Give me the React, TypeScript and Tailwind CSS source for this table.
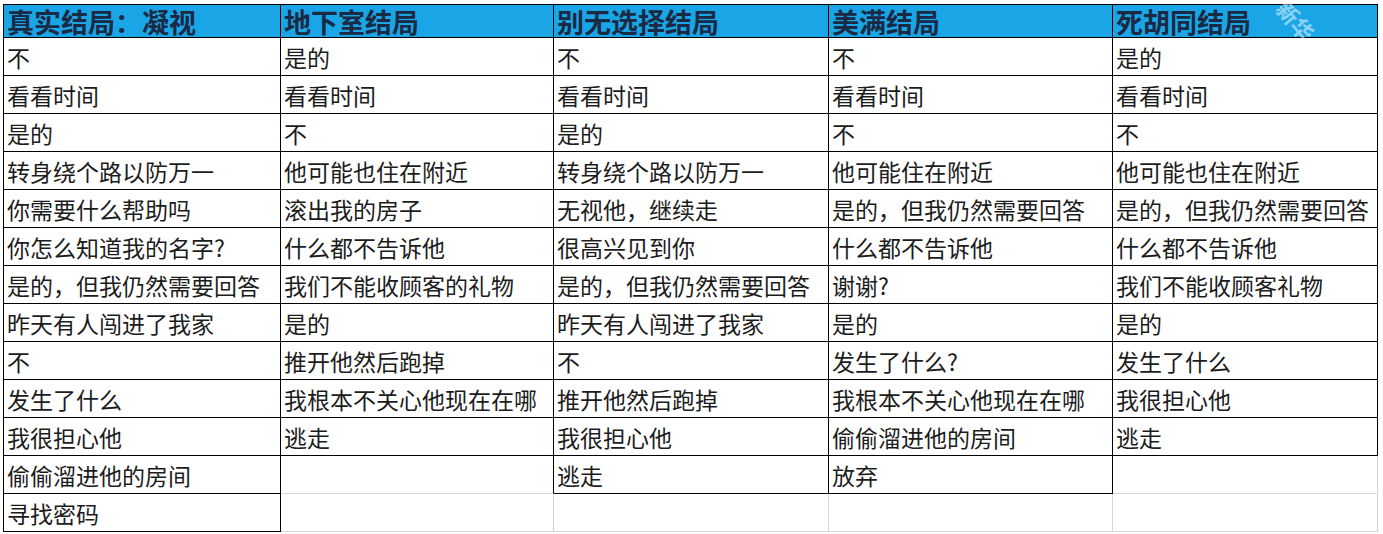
import React from "react";

const columns: { title: string; items: string[] }[] = [
  {
    title: "真实结局：凝视",
    items: [
      "不",
      "看看时间",
      "是的",
      "转身绕个路以防万一",
      "你需要什么帮助吗",
      "你怎么知道我的名字?",
      "是的，但我仍然需要回答",
      "昨天有人闯进了我家",
      "不",
      "发生了什么",
      "我很担心他",
      "偷偷溜进他的房间",
      "寻找密码",
    ],
  },
  {
    title: "地下室结局",
    items: [
      "是的",
      "看看时间",
      "不",
      "他可能也住在附近",
      "滚出我的房子",
      "什么都不告诉他",
      "我们不能收顾客的礼物",
      "是的",
      "推开他然后跑掉",
      "我根本不关心他现在在哪",
      "逃走",
    ],
  },
  {
    title: "别无选择结局",
    items: [
      "不",
      "看看时间",
      "是的",
      "转身绕个路以防万一",
      "无视他，继续走",
      "很高兴见到你",
      "是的，但我仍然需要回答",
      "昨天有人闯进了我家",
      "不",
      "推开他然后跑掉",
      "我很担心他",
      "逃走",
    ],
  },
  {
    title: "美满结局",
    items: [
      "不",
      "看看时间",
      "不",
      "他可能住在附近",
      "是的，但我仍然需要回答",
      "什么都不告诉他",
      "谢谢?",
      "是的",
      "发生了什么?",
      "我根本不关心他现在在哪",
      "偷偷溜进他的房间",
      "放弃",
    ],
  },
  {
    title: "死胡同结局",
    items: [
      "是的",
      "看看时间",
      "不",
      "他可能也住在附近",
      "是的，但我仍然需要回答",
      "什么都不告诉他",
      "我们不能收顾客礼物",
      "是的",
      "发生了什么",
      "我很担心他",
      "逃走",
    ],
  },
];

const ROWS = 13;
const font = {
  fontFamily:
    '"Noto Sans CJK SC", "Noto Sans", "Liberation Sans", sans-serif',
};

export default function App() {
  const cells: React.ReactNode[] = [];

  columns.forEach((c, ci) => {
    cells.push(
      <div
        key={`h-${ci}`}
        className={`flex items-center whitespace-nowrap border-b border-r border-t border-black bg-[#19a5e6] pl-[3px] pt-[1px] text-[27px] font-bold leading-[32px] text-[#1a2944] ${
          ci === 0 ? "border-l" : ""
        }`}
      >
        <span>{c.title}</span>
      </div>
    );
  });

  for (let r = 0; r < ROWS; r++) {
    columns.forEach((c, ci) => {
      const filled = r < c.items.length;
      const nextFilled =
        ci + 1 < columns.length && r < columns[ci + 1].items.length;
      const rightBlack = filled || nextFilled;
      const bottomBlack = filled;
      const leftBlack = ci === 0 && filled;
      cells.push(
        <div
          key={`c-${r}-${ci}`}
          className={`flex items-center whitespace-nowrap border-b border-r pl-[3px] text-[23px] leading-[30px] text-[#1c1c1c] ${
            rightBlack ? "border-r-black" : "border-r-[#d6d6d6]"
          } ${bottomBlack ? "border-b-black" : "border-b-[#d6d6d6]"} ${
            ci === 0
              ? leftBlack
                ? "border-l border-l-black"
                : "border-l border-l-[#d6d6d6]"
              : ""
          }`}
        >
          {filled ? <span>{c.items[r]}</span> : null}
        </div>
      );
    });
  }

  return (
    <div
      className="relative h-[534px] w-[1383px] overflow-hidden bg-white"
      style={font}
    >
      <div className="pl-[3px] pt-[4px]">
        <div className="grid grid-cols-[278px_273px_275px_284px_265px] grid-rows-[34px_repeat(13,38px)]">
          {cells}
        </div>
      </div>
      <span className="pointer-events-none absolute left-[1274px] top-[4px] rotate-[50deg] text-[22px] font-bold text-white/50">
        新华
      </span>
    </div>
  );
}
